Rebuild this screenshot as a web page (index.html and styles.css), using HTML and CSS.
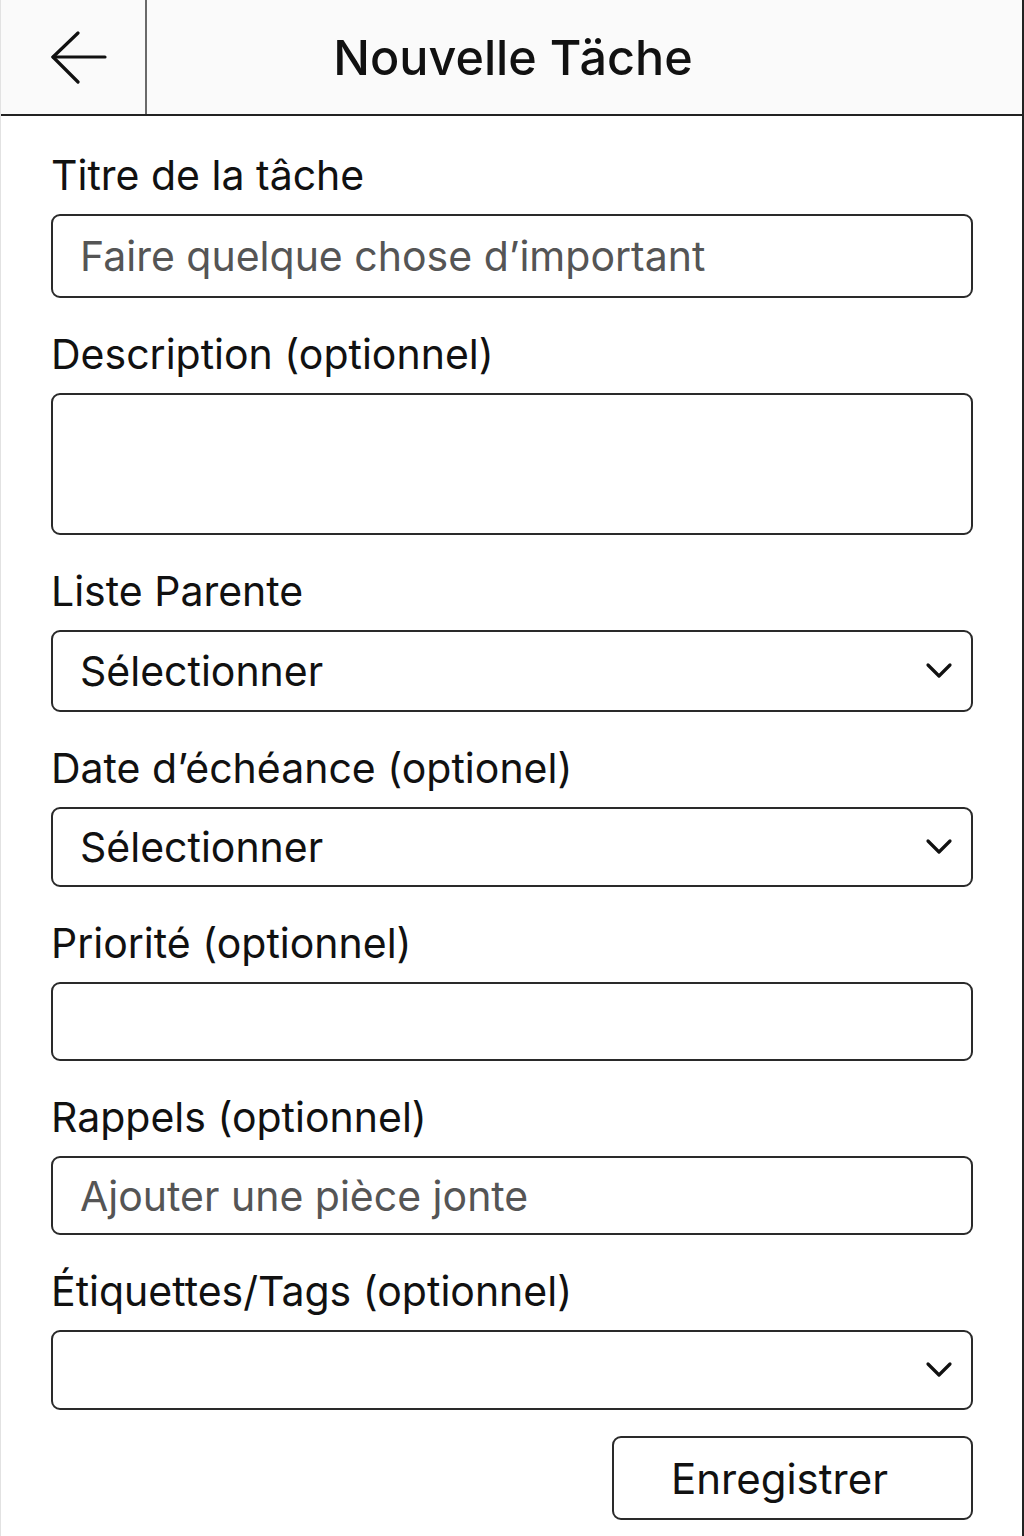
FILE: index.html
```html
<!DOCTYPE html>
<html lang="fr">
<head>
<meta charset="utf-8">
<title>Nouvelle Täche</title>
<link rel="stylesheet" href="styles.css">
</head>
<body>
<div class="page">
  <header class="topbar">
    <button class="back" aria-label="Retour">
      <svg width="58" height="54" viewBox="0 0 58 54" fill="none" stroke="#111" stroke-width="3.2" stroke-linecap="round" stroke-linejoin="round">
        <polyline points="28,2 3,26 28,51"/>
        <line x1="3" y1="26" x2="55" y2="26"/>
      </svg>
    </button>
    <h1 class="title">Nouvelle Täche</h1>
    <div class="spacer"></div>
  </header>

  <form class="form">
    <label class="label">Titre de la tâche</label>
    <div class="field h84"><span class="placeholder">Faire quelque chose d’important</span></div>

    <label class="label">Description (optionnel)</label>
    <div class="field h142"></div>

    <label class="label">Liste Parente</label>
    <div class="field select h82"><span class="value">Sélectionner</span><svg class="chev" width="28" height="18" viewBox="0 0 28 18" fill="none" stroke="#111" stroke-width="3.2" stroke-linecap="round" stroke-linejoin="round"><polyline points="3,3 14,14 25,3"/></svg></div>

    <label class="label">Date d’échéance (optionel)</label>
    <div class="field select h80"><span class="value">Sélectionner</span><svg class="chev" width="28" height="18" viewBox="0 0 28 18" fill="none" stroke="#111" stroke-width="3.2" stroke-linecap="round" stroke-linejoin="round"><polyline points="3,3 14,14 25,3"/></svg></div>

    <label class="label">Priorité (optionnel)</label>
    <div class="field h79"></div>

    <label class="label">Rappels (optionnel)</label>
    <div class="field h79"><span class="placeholder">Ajouter une pièce jonte</span></div>

    <label class="label">Étiquettes/Tags (optionnel)</label>
    <div class="field select h80"><span class="value"></span><svg class="chev" width="28" height="18" viewBox="0 0 28 18" fill="none" stroke="#111" stroke-width="3.2" stroke-linecap="round" stroke-linejoin="round"><polyline points="3,3 14,14 25,3"/></svg></div>

    <div class="actions">
      <button type="button" class="save">Enregistrer</button>
    </div>
  </form>
</div>
</body>
</html>
```

FILE: styles.css
```css
* { box-sizing: border-box; }
html, body { margin: 0; padding: 0; background: #fff; }
body {
  font-family: Inter, "Noto Sans", "Liberation Sans", sans-serif;
  color: #111;
}
.page {
  width: 1024px;
  height: 1536px;
  border-left: 1px solid #e2e2e2;
  border-right: 2px solid #222;
  overflow: hidden;
}
.topbar {
  display: grid;
  grid-template-columns: 146px 1fr 146px;
  height: 116px;
  background: #fafafa;
  border-bottom: 2px solid #222;
}
.back {
  border: 0;
  border-right: 2px solid #6a6a6a;
  background: transparent;
  padding: 0 0 0 49px;
  display: flex;
  align-items: center;
  justify-content: flex-start;
}
.back svg { display: block; margin-top: 2px; }
.title {
  margin: 0;
  font-size: 48.5px;
  font-weight: 500;
  display: flex;
  align-items: center;
  justify-content: center;
  letter-spacing: 0;
  color: #111;
  padding: 1px 0 0 3px;
}
.form {
  display: flex;
  flex-direction: column;
  padding: 3px 49px 0 50px;
}
.label {
  display: block;
  font-size: 41px;
  line-height: 48px;
  height: 48px;
  margin: 32px 0 15px;
  color: #111;
}
.field {
  border: 2px solid #2a2a2a;
  border-radius: 9px;
  display: flex;
  align-items: center;
  padding: 0 18px 0 27px;
  font-size: 41px;
  background: #fff;
}
.h84 { height: 84px; }
.h142 { height: 142px; }
.h82 { height: 82px; }
.h80 { height: 80px; }
.h79 { height: 79px; }
.placeholder { color: #555; }
.value { color: #111; flex: 1; }
.chev { display: block; flex: none; }
.actions {
  display: flex;
  justify-content: flex-end;
  margin-top: 26px;
}
.save {
  width: 361px;
  height: 84px;
  border: 2px solid #2a2a2a;
  border-radius: 9px;
  background: #fff;
  font-family: inherit;
  font-size: 42px;
  color: #111;
  padding: 0 26px 0 0;
}
```
